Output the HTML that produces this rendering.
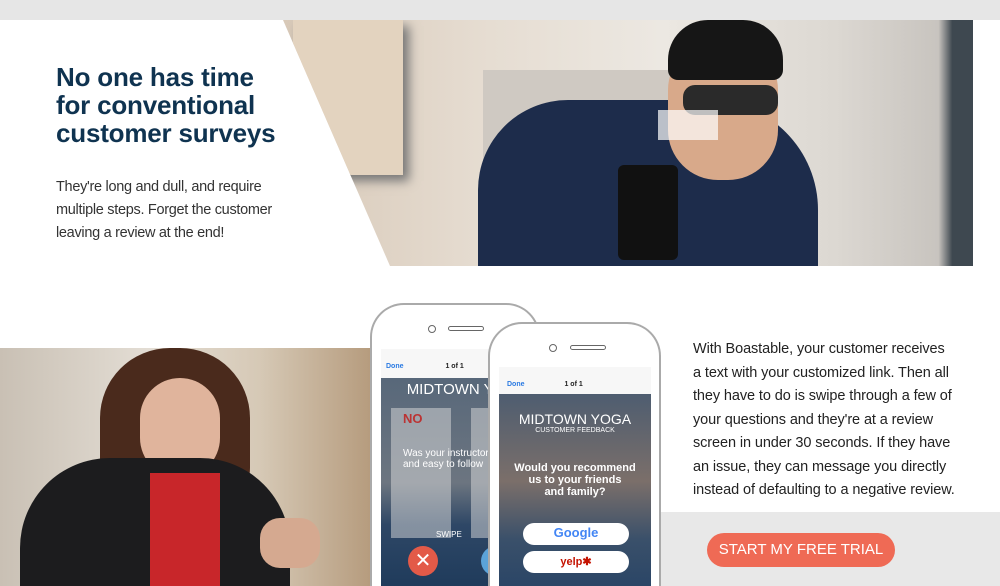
<!DOCTYPE html>
<html><head><style>
*{margin:0;padding:0;box-sizing:border-box}
html,body{width:1000px;height:586px;overflow:hidden;background:#fff}
body{font-family:"Liberation Sans",sans-serif;position:relative}
#w{position:absolute;left:0;top:0;width:1000px;height:586px;overflow:hidden}
.abs{position:absolute}
h1{position:absolute;left:56px;top:63px;font-size:26px;line-height:28px;color:#0f3350;font-weight:bold;letter-spacing:-0.2px}
.p1{position:absolute;left:56px;top:176px;font-size:14.5px;line-height:23px;color:#333;white-space:nowrap;letter-spacing:-0.3px}
.p2{position:absolute;left:693px;top:338px;font-size:14.5px;line-height:23.5px;color:#222;white-space:nowrap;letter-spacing:-0.1px}
.phone{position:absolute;background:#fff;border:2px solid #aaa;border-bottom:none;border-radius:34px 34px 0 0;overflow:hidden}
</style></head><body><div id="w">
<div class="abs" style="left:0;top:0;width:1000px;height:20px;background:#e6e6e6"></div>
<div class="abs" style="left:283px;top:20px;width:690px;height:246px;overflow:hidden;clip-path:polygon(0 0,100% 0,100% 100%,107px 100%);background:linear-gradient(90deg,#d8c9b8 0%,#e6ddd2 30%,#ece8e2 55%,#dcd8d2 80%,#c8c4bf 95%,#3e4850 97%)">
 <div class="abs" style="left:10px;top:0;width:110px;height:155px;background:#e3d3bf;box-shadow:6px 6px 10px #777"></div>
 <div class="abs" style="left:200px;top:50px;width:200px;height:196px;background:#cfc9c2"></div>
 <div class="abs" style="left:195px;top:80px;width:340px;height:200px;background:#1d2c4b;border-radius:90px 110px 0 0"></div>
 <div class="abs" style="left:385px;top:20px;width:110px;height:140px;background:#d8a98a;border-radius:50px"></div>
 <div class="abs" style="left:385px;top:0;width:115px;height:60px;background:#161616;border-radius:40px 40px 10px 10px"></div>
 <div class="abs" style="left:400px;top:65px;width:95px;height:30px;background:#2a2a2a;border-radius:12px"></div>
 <div class="abs" style="left:335px;top:145px;width:60px;height:95px;background:#111;border-radius:6px"></div>
 <div class="abs" style="left:375px;top:90px;width:60px;height:30px;background:#fff;opacity:.7"></div>
</div>
<h1>No one has time<br>for conventional<br>customer surveys</h1>
<div class="p1">They're long and dull, and require<br>multiple steps. Forget the customer<br>leaving a review at the end!</div>
<div class="abs" style="left:0;top:348px;width:370px;height:238px;overflow:hidden;background:linear-gradient(90deg,#c9c0b4,#e3ddd4 40%,#d6c9b6 70%,#b69c7e)">
 <div class="abs" style="left:100px;top:0;width:150px;height:160px;background:#4a2a1c;border-radius:70px 70px 40px 40px"></div>
 <div class="abs" style="left:140px;top:30px;width:80px;height:100px;background:#e0b49c;border-radius:40px"></div>
 <div class="abs" style="left:20px;top:110px;width:270px;height:150px;background:#1c1c1e;border-radius:90px 90px 0 0"></div>
 <div class="abs" style="left:150px;top:125px;width:70px;height:113px;background:#c8262a"></div>
 <div class="abs" style="left:260px;top:170px;width:60px;height:50px;background:#d5a990;border-radius:20px"></div>
</div>
<div class="phone" style="left:370px;top:303px;width:170px;height:283px">
 <div class="abs" style="left:56px;top:20px;width:8px;height:8px;border:1px solid #666;border-radius:50%"></div>
 <div class="abs" style="left:76px;top:21px;width:36px;height:5px;border:1px solid #666;border-radius:3px"></div>
 <div class="abs" style="left:9px;top:44px;width:150px;height:239px;background:#f7f7f7;font-size:7px">
  <div style="padding:14px 5px 0;color:#2a7ae2;font-weight:bold">Done <span style="color:#222;margin-left:40px">1 of 1</span></div>
  <div class="abs" style="top:29px;left:0;width:150px;height:210px;background:linear-gradient(#58687a,#6c7580 50%,#2e4766 70%,#1f3b5b);color:#fff;text-align:center;overflow:hidden">
   <div style="font-size:15px;margin-top:3px">MIDTOWN YO</div>
   <div class="abs" style="left:10px;top:30px;width:60px;height:130px;background:rgba(220,220,220,.5)"></div>
   <div class="abs" style="left:90px;top:30px;width:60px;height:130px;background:rgba(220,220,220,.5)"></div>
   <div class="abs" style="left:22px;top:33px;font-size:13px;color:#b33;font-weight:bold">NO</div>
   <div class="abs" style="left:22px;top:70px;font-size:10px;text-align:left">Was your instructor c<br>and easy to follow</div>
   <div class="abs" style="left:55px;top:152px;font-size:8px">SWIPE</div>
   <div class="abs" style="left:27px;top:168px;width:30px;height:30px;border-radius:50%;background:#e35a48;font-size:20px;line-height:30px">✕</div>
   <div class="abs" style="left:100px;top:168px;width:30px;height:30px;border-radius:50%;background:#5ba3d9"></div>
  </div>
 </div>
</div>
<div class="abs" style="left:660px;top:512px;width:340px;height:74px;background:#e8e8e8"></div>
<div class="phone" style="left:488px;top:322px;width:173px;height:264px">
 <div class="abs" style="left:59px;top:20px;width:8px;height:8px;border:1px solid #666;border-radius:50%"></div>
 <div class="abs" style="left:80px;top:21px;width:36px;height:5px;border:1px solid #666;border-radius:3px"></div>
 <div class="abs" style="left:9px;top:43px;width:152px;height:221px;background:#f7f7f7;font-size:7px">
  <div style="padding:14px 8px 0;color:#2a7ae2;font-weight:bold">Done <span style="color:#222;margin-left:38px">1 of 1</span></div>
  <div class="abs" style="top:27px;left:0;width:152px;height:194px;background:linear-gradient(#4e5d70,#7b6f6a 45%,#3a506a 75%,#2a4566);color:#fff;text-align:center;overflow:hidden">
   <div style="font-size:14px;margin-top:17px">MIDTOWN YOGA</div>
   <div style="font-size:7px">CUSTOMER FEEDBACK</div>
   <div style="font-size:11px;font-weight:bold;line-height:12px;margin-top:28px">Would you recommend<br>us to your friends<br>and family?</div>
   <div class="abs" style="left:24px;top:129px;width:106px;height:22px;background:#fff;border-radius:11px;color:#4285f4;font-size:13px;font-weight:bold;line-height:20px">Google</div>
   <div class="abs" style="left:24px;top:157px;width:106px;height:22px;background:#fff;border-radius:11px;color:#c41200;font-size:11px;font-weight:bold;line-height:22px">yelp✱</div>
  </div>
 </div>
</div>
<div class="p2">With Boastable, your customer receives<br>a text with your customized link. Then all<br>they have to do is swipe through a few of<br>your questions and they're at a review<br>screen in under 30 seconds.  If they have<br>an issue, they can message you directly<br>instead of defaulting to a negative review.</div>
<div class="abs" style="left:707px;top:533px;width:188px;height:34px;background:#ef6a55;border-radius:17px;color:#fff;font-size:15px;line-height:34px;text-align:center">START MY FREE TRIAL</div>
</div></body></html>
